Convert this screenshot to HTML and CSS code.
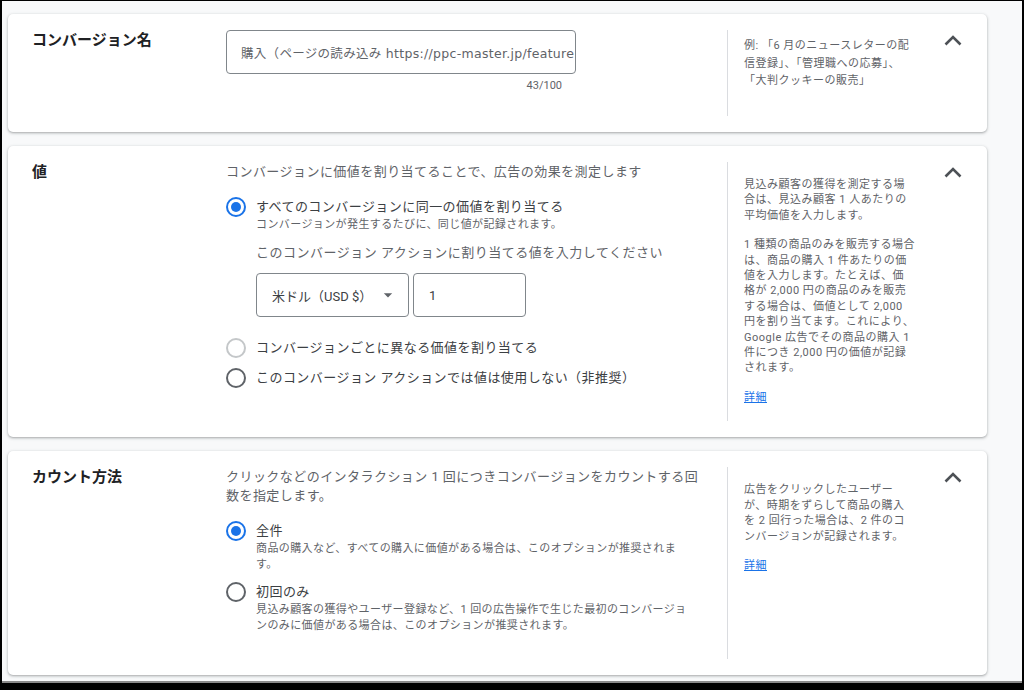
FILE: index.html
```html
<!DOCTYPE html>
<html lang="ja">
<head>
    <meta charset="UTF-8">
    <title>コンバージョン アクションの編集</title>
    <link rel="stylesheet" href="styles.css">
</head>
<body>
    <div class="frame">
        <section class="card">
            <h2 class="card-title">コンバージョン名</h2>
            <div class="card-main name-main">
                <div class="name-box">
                    <input class="text-field name-field" type="text" value="購入（ページの読み込み https://ppc-master.jp/features）" readonly>
                    <div class="counter">43/100</div>
                </div>
            </div>
            <div class="card-help help-name">
                <p>例: 「6 月のニュースレターの配<br>信登録」、「管理職への応募」、<br>「大判クッキーの販売」</p>
            </div>
            <button class="collapse" type="button" aria-label="閉じる">
                <svg viewBox="0 0 24 24" width="24" height="24"><polyline points="4.5,15.5 12,8 19.5,15.5"/></svg>
            </button>
        </section>

        <section class="card">
            <h2 class="card-title">値</h2>
            <div class="card-main">
                <p class="card-desc">コンバージョンに価値を割り当てることで、広告の効果を測定します</p>
                <div class="radio-row first">
                    <span class="radio checked"></span>
                    <div class="radio-text">
                        <div class="radio-label">すべてのコンバージョンに同一の価値を割り当てる</div>
                        <div class="radio-sub">コンバージョンが発生するたびに、同じ値が記録されます。</div>
                    </div>
                </div>
                <div class="value-block">
                    <div class="value-prompt">このコンバージョン アクションに割り当てる値を入力してください</div>
                    <div class="value-fields">
                        <div class="text-field currency">
                            <span>米ドル（USD $）</span>
                            <svg viewBox="0 0 24 24" width="20" height="20"><path d="M7 10l5 5 5-5z"/></svg>
                        </div>
                        <div class="text-field amount">1</div>
                    </div>
                </div>
                <div class="radio-row spaced">
                    <span class="radio disabled"></span>
                    <div class="radio-text">
                        <div class="radio-label">コンバージョンごとに異なる価値を割り当てる</div>
                    </div>
                </div>
                <div class="radio-row">
                    <span class="radio"></span>
                    <div class="radio-text">
                        <div class="radio-label">このコンバージョン アクションでは値は使用しない（非推奨）</div>
                    </div>
                </div>
            </div>
            <div class="card-help">
                <p>見込み顧客の獲得を測定する場<br>合は、見込み顧客 1 人あたりの<br>平均価値を入力します。</p>
                <p>1 種類の商品のみを販売する場合<br>は、商品の購入 1 件あたりの価<br>値を入力します。たとえば、価<br>格が 2,000 円の商品のみを販売<br>する場合は、価値として 2,000<br>円を割り当てます。これにより、<br>Google 広告でその商品の購入 1<br>件につき 2,000 円の価値が記録<br>されます。</p>
                <p><a href="#">詳細</a></p>
            </div>
            <button class="collapse" type="button" aria-label="閉じる">
                <svg viewBox="0 0 24 24" width="24" height="24"><polyline points="4.5,15.5 12,8 19.5,15.5"/></svg>
            </button>
        </section>

        <section class="card">
            <h2 class="card-title">カウント方法</h2>
            <div class="card-main">
                <p class="card-desc two-line">クリックなどのインタラクション 1 回につきコンバージョンをカウントする回<br>数を指定します。</p>
                <div class="radio-row count-first">
                    <span class="radio checked"></span>
                    <div class="radio-text">
                        <div class="radio-label">全件</div>
                        <div class="radio-sub">商品の購入など、すべての購入に価値がある場合は、このオプションが推奨されま<br>す。</div>
                    </div>
                </div>
                <div class="radio-row count-next">
                    <span class="radio"></span>
                    <div class="radio-text">
                        <div class="radio-label">初回のみ</div>
                        <div class="radio-sub">見込み顧客の獲得やユーザー登録など、1 回の広告操作で生じた最初のコンバージョ<br>ンのみに価値がある場合は、このオプションが推奨されます。</div>
                    </div>
                </div>
            </div>
            <div class="card-help">
                <p>広告をクリックしたユーザー<br>が、時期をずらして商品の購入<br>を 2 回行った場合は、2 件のコ<br>ンバージョンが記録されます。</p>
                <p><a href="#">詳細</a></p>
            </div>
            <button class="collapse" type="button" aria-label="閉じる">
                <svg viewBox="0 0 24 24" width="24" height="24"><polyline points="4.5,15.5 12,8 19.5,15.5"/></svg>
            </button>
        </section>
    </div>
</body>
</html>
```

FILE: styles.css
```css
html, body {
    margin: 0;
    padding: 0;
    background: #000;
    height: 690px;
    overflow: hidden;
}
body {
    font-family: Roboto, "Noto Sans CJK JP", sans-serif;
    color: #3c4043;
}
.frame {
    margin: 1px 2px 0 2px;
    height: 682px;
    box-sizing: border-box;
    padding: 13px 35px 0 6px;
    background: #f8f9fa;
    border-bottom: 2px solid #8a8a8a;
}
.card {
    display: grid;
    grid-template-columns: 194px 501px 214px 24px;
    padding: 16px 22px 0 24px;
    margin-bottom: 14px;
    background: #fff;
    border-radius: 5px;
    box-shadow: 0 1px 2px rgba(60, 64, 67, 0.3), 0 1px 3px 1px rgba(60, 64, 67, 0.12);
}
.card-title {
    margin: 0;
    font-size: 15px;
    line-height: 20px;
    font-weight: 700;
    color: #202124;
}
.card-main {
    padding: 0 24px 25px 0;
    margin-bottom: 16px;
}
.card-main.name-main {
    padding-bottom: 22px;
}
.card-help {
    border-left: 1px solid #dadce0;
    padding: 15px 0 16px 16px;
    margin-bottom: 16px;
    font-size: 11px;
    letter-spacing: 0.5px;
    line-height: 15.4px;
    color: #5f6368;
}
.card-help p {
    margin: 0 0 14px;
}
.card-help p:last-child {
    margin-bottom: 0;
}
.card-help a {
    color: #1a73e8;
}
.help-name {
    padding-top: 7px;
    line-height: 17.5px;
}
.collapse {
    align-self: start;
    margin-top: -1px;
    padding: 0;
    border: none;
    background: none;
    width: 24px;
    height: 24px;
}
.collapse svg {
    fill: none;
    stroke: #4d5156;
    stroke-width: 2.6;
}

/* name field */
.name-box {
    width: 350px;
}
.text-field {
    box-sizing: border-box;
    height: 44px;
    border: 1px solid #80868b;
    border-radius: 4px;
    background: #fff;
    font-family: inherit;
    font-size: 13px;
    color: #3c4043;
}
.name-field {
    width: 350px;
    padding: 0 1px 0 14px;
    font-family: "DejaVu Sans", "Noto Sans CJK JP", sans-serif;
    font-size: 12.5px;
    letter-spacing: 0.3px;
    color: #5f6368;
    outline: none;
}
.counter {
    margin-top: 4px;
    padding-right: 14px;
    text-align: right;
    font-size: 11px;
    line-height: 16px;
    color: #5f6368;
}

/* value */
.card-desc {
    margin: 0;
    font-size: 13px;
    letter-spacing: 0.45px;
    line-height: 20px;
    color: #5f6368;
}
.card-desc.two-line {
    line-height: 19px;
}
.radio-row {
    display: flex;
    gap: 10px;
    margin-top: 10px;
}
.radio-row.first {
    margin-top: 15px;
}
.radio-row.spaced {
    margin-top: 21px;
}
.radio-row.count-first {
    margin-top: 16px;
}
.radio-row.count-next {
    margin-top: 9px;
}
.radio {
    flex: none;
    box-sizing: border-box;
    width: 20px;
    height: 20px;
    border: 2px solid #5f6368;
    border-radius: 50%;
    display: flex;
    align-items: center;
    justify-content: center;
}
.radio.checked {
    border-color: #1a73e8;
}
.radio.checked::after {
    content: "";
    width: 10px;
    height: 10px;
    border-radius: 50%;
    background: #1a73e8;
}
.radio.disabled {
    border-color: #c4c7c9;
}
.radio-label {
    font-size: 13px;
    letter-spacing: 0.45px;
    line-height: 20px;
    color: #3c4043;
}
.radio-sub {
    font-size: 11px;
    letter-spacing: 0.4px;
    line-height: 16px;
    color: #5f6368;
}
.value-block {
    padding-left: 30px;
}
.value-prompt {
    margin-top: 10px;
    font-size: 13px;
    letter-spacing: 0.5px;
    line-height: 20px;
    color: #5f6368;
}
.value-fields {
    display: flex;
    gap: 4px;
    margin-top: 10px;
}
.currency {
    width: 153px;
    display: flex;
    align-items: center;
    justify-content: space-between;
    padding: 0 10px 0 15px;
    fill: #5f6368;
}
.amount {
    width: 113px;
    display: flex;
    align-items: center;
    padding-left: 15px;
}
```
